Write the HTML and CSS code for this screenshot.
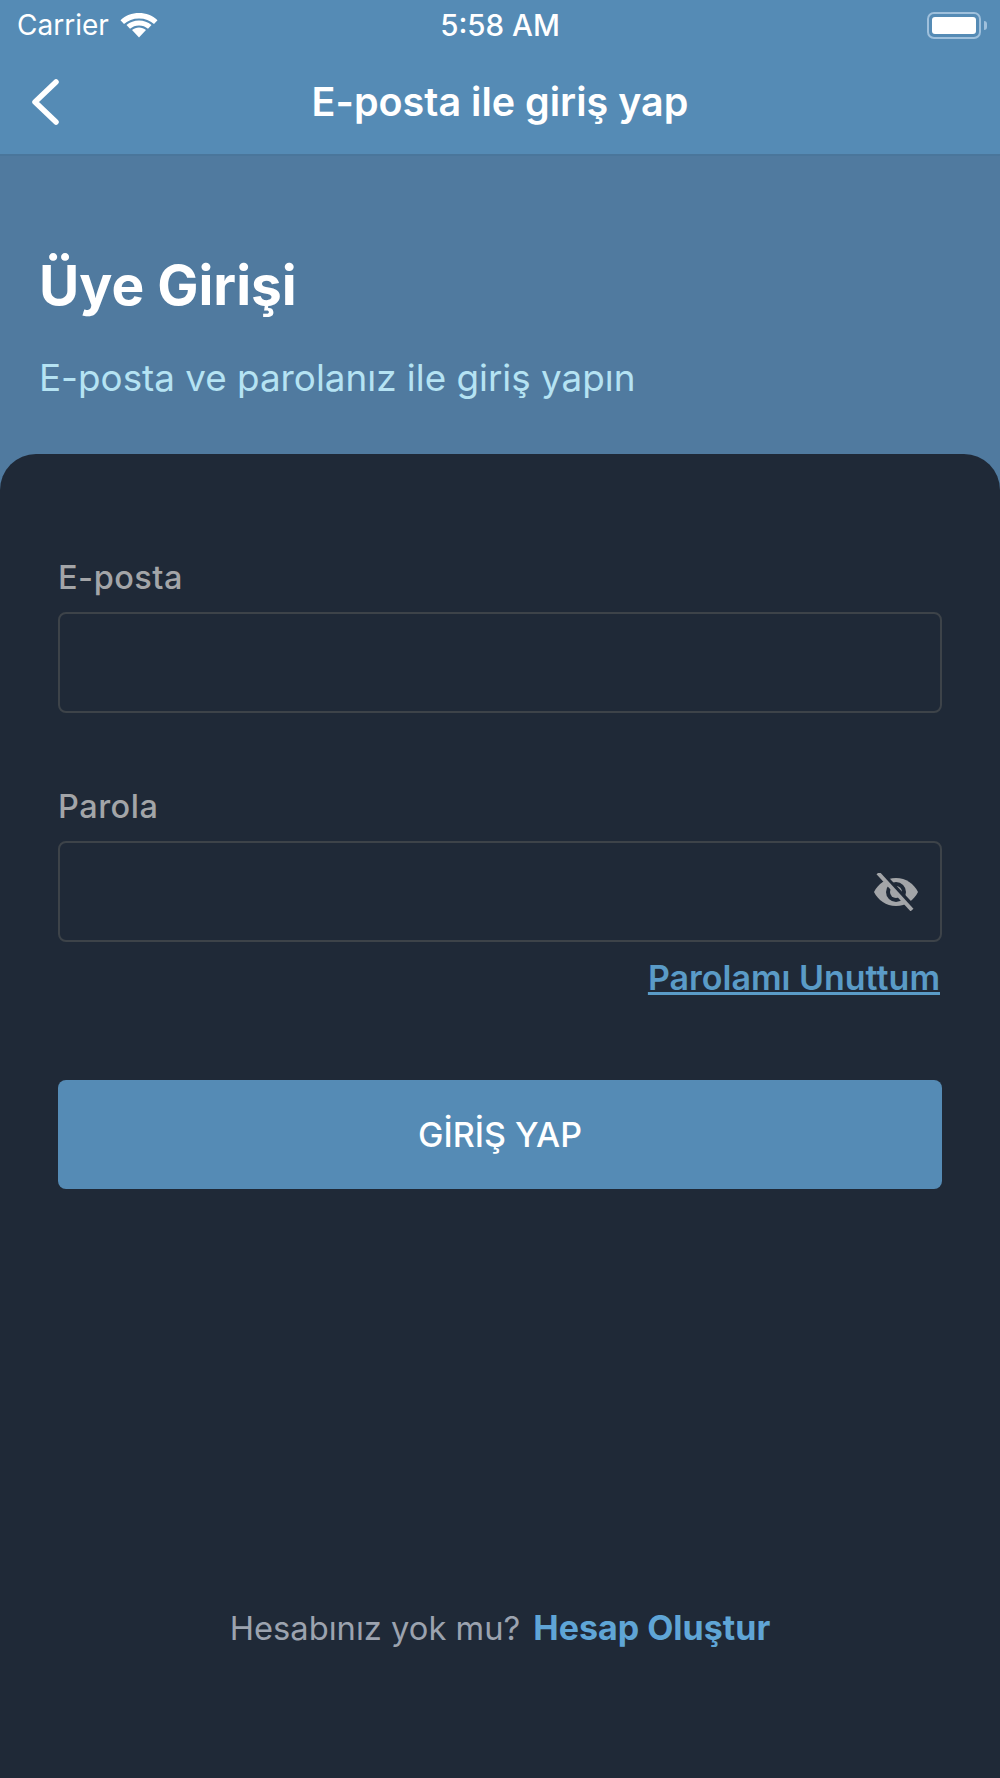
FILE: index.html
```html
<!DOCTYPE html>
<html lang="tr">
<head>
    <meta charset="UTF-8">
    <meta name="viewport" content="width=device-width, initial-scale=1.0">
    <title>Üye Girişi</title>
    <link rel="stylesheet" href="styles.css">
</head>
<body>
    <header class="topbar">
        <div class="status">
            <div class="status-left">
                <span>Carrier</span>
                <svg class="wifi" width="38" height="28" viewBox="0 0 38 28">
                    <path d="M19 7.500C25 7.500 30 9.500 34 13L37.500 9.200C32.500 4.500 26 2 19 2C12 2 5.500 4.500 .5 9.200L4 13C8 9.500 13 7.500 19 7.500Z" fill="#fff"/>
                    <path d="M19 14.500C22.500 14.500 25.500 15.700 28 17.800L31.500 14C28 11 23.700 9.400 19 9.400C14.300 9.400 10 11 6.500 14L10 17.800C12.500 15.700 15.500 14.500 19 14.500Z" fill="#fff"/>
                    <path d="M19 16.500C16.300 16.500 14 17.400 12 19L19 26.500L26 19C24 17.400 21.700 16.500 19 16.500Z" fill="#fff"/>
                </svg>
            </div>
            <div class="status-time">5:58 AM</div>
            <div class="status-right">
                <div class="battery"><div class="battery-fill"></div></div>
                <div class="battery-cap"></div>
            </div>
        </div>
        <div class="navbar">
            <svg class="back" width="30" height="46" viewBox="0 0 30 46">
                <path d="M25 3L4 23L25 43" fill="none" stroke="#fff" stroke-width="5.500" stroke-linecap="round" stroke-linejoin="round"/>
            </svg>
            <div class="nav-title">E-posta ile giriş yap</div>
        </div>
    </header>

    <section class="hero">
        <h1>Üye Girişi</h1>
        <p>E-posta ve parolanız ile giriş yapın</p>
    </section>

    <main class="sheet">
        <form class="login-form">
            <label class="field-label">E-posta</label>
            <div class="input"></div>

            <label class="field-label field-label-second">Parola</label>
            <div class="input input-password">
                <svg class="eye" width="46" height="38" viewBox="0 0 46 38">
                    <path d="M23 5C13 5 5 11 1 19C5 27 13 33 23 33C33 33 41 27 45 19C41 11 33 5 23 5Z" fill="#a3a5a8"/>
                    <circle cx="23" cy="19" r="10" fill="#1f2937"/>
                    <circle cx="23" cy="19" r="6" fill="#a3a5a8"/>
                    <path d="M8 0L42 36" stroke="#1f2937" stroke-width="5"/>
                    <path d="M5 0L39 37" stroke="#a3a5a8" stroke-width="4"/>
                </svg>
            </div>
            <div class="forgot-row"><a class="forgot" href="#">Parolamı Unuttum</a></div>

            <button class="submit" type="button">GİRİŞ YAP</button>
        </form>

        <div class="signup">
            <span>Hesabınız yok mu?</span>
            <a href="#">Hesap Oluştur</a>
        </div>
    </main>
</body>
</html>
```

FILE: styles.css
```css
* {
    box-sizing: border-box;
}
html, body {
    margin: 0;
    height: 100%;
}
body {
    width: 1000px;
    height: 1778px;
    display: flex;
    flex-direction: column;
    font-family: Inter, "Liberation Sans", sans-serif;
    background: #507a9f;
    overflow: hidden;
}
.topbar {
    height: 156px;
    background: #558bb5;
    border-bottom: 2px solid #4a769b;
    color: #fff;
}
.status {
    height: 50px;
    display: flex;
    align-items: center;
    justify-content: space-between;
    position: relative;
    padding: 0 13px 0 17px;
    font-size: 28px;
}
.status-left {
    display: flex;
    align-items: center;
    gap: 11px;
}
.status-time {
    position: absolute;
    left: 0;
    right: 0;
    text-align: center;
    font-size: 29.500px;
    font-weight: 500;
}
.status-right {
    display: flex;
    align-items: center;
    gap: 3px;
}
.battery {
    width: 54px;
    height: 27px;
    padding: 3px;
    border: 2px solid #9fc0dc;
    border-radius: 7px;
}
.battery-fill {
    height: 100%;
    background: #fff;
    border-radius: 3px;
}
.battery-cap {
    width: 3px;
    height: 9px;
    background: #9fc0dc;
    border-radius: 0 3px 3px 0;
}
.navbar {
    height: 104px;
    display: flex;
    align-items: center;
    justify-content: center;
    position: relative;
}
.back {
    position: absolute;
    left: 31px;
    top: 29px;
}
.nav-title {
    font-size: 39.500px;
    font-weight: 600;
}
.hero {
    height: 298px;
    padding: 99px 39px 0;
}
.hero h1 {
    margin: 0;
    font-size: 55px;
    line-height: 60px;
    font-weight: 700;
    color: #fff;
}
.hero p {
    margin: 42px 0 0;
    font-size: 36.800px;
    line-height: 42px;
    color: #b5e3f3;
}
.sheet {
    flex: 1;
    display: flex;
    flex-direction: column;
    justify-content: space-between;
    padding: 106px 58px 128px;
    background: #1f2937;
    border-radius: 36px 36px 0 0;
}
.field-label {
    display: block;
    font-size: 32.500px;
    line-height: 36px;
    font-weight: 500;
    letter-spacing: .5px;
    color: #a3a5a8;
}
.field-label-second {
    margin-top: 76px;
}
.input {
    height: 101px;
    margin-top: 16px;
    border: 2px solid #3d4349;
    border-radius: 8px;
}
.input-password {
    display: flex;
    align-items: center;
    justify-content: flex-end;
    padding-right: 21px;
}
.forgot-row {
    display: flex;
    justify-content: flex-end;
    margin-top: 16px;
    padding-right: 2px;
}
.forgot {
    font-size: 34px;
    line-height: 40px;
    font-weight: 600;
    color: #5a9bc7;
}
.submit {
    display: block;
    width: 100%;
    height: 109px;
    margin-top: 82px;
    border: none;
    border-radius: 8px;
    background: #558bb5;
    color: #fff;
    font-family: inherit;
    font-size: 34px;
    font-weight: 500;
}
.signup {
    display: flex;
    justify-content: center;
    gap: 13px;
    font-size: 32.700px;
    line-height: 44px;
    color: #9ca3af;
}
.signup a {
    color: #5fa5d6;
    font-size: 34px;
    font-weight: 700;
    text-decoration: none;
}
```
